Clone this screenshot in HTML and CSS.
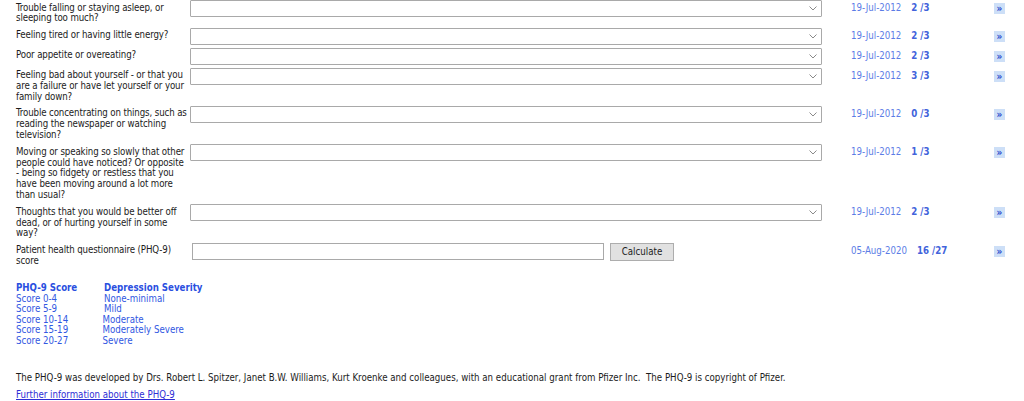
FILE: index.html
```html
<!DOCTYPE html>
<html lang="en">
<head>
<meta charset="utf-8">
<title>PHQ-9</title>
<link rel="stylesheet" href="styles.css">
</head>
<body>
<div class="page">
  <div class="questions">
    <div class="row">
      <div class="label">Trouble falling or staying asleep, or sleeping too much?</div>
      <div class="control"><div class="select"><svg class="chev" width="8" height="5" viewBox="0 0 8 5"><path d="M0.5 0.5 L4 4 L7.5 0.5" fill="none" stroke="#8a8a8a" stroke-width="1"/></svg></div></div>
      <div class="result"><span class="date">19-Jul-2012</span><span class="score">2 /3</span></div>
      <div class="more"><span class="go">»</span></div>
    </div>
    <div class="row">
      <div class="label">Feeling tired or having little energy?</div>
      <div class="control"><div class="select"><svg class="chev" width="8" height="5" viewBox="0 0 8 5"><path d="M0.5 0.5 L4 4 L7.5 0.5" fill="none" stroke="#8a8a8a" stroke-width="1"/></svg></div></div>
      <div class="result"><span class="date">19-Jul-2012</span><span class="score">2 /3</span></div>
      <div class="more"><span class="go">»</span></div>
    </div>
    <div class="row">
      <div class="label">Poor appetite or overeating?</div>
      <div class="control"><div class="select"><svg class="chev" width="8" height="5" viewBox="0 0 8 5"><path d="M0.5 0.5 L4 4 L7.5 0.5" fill="none" stroke="#8a8a8a" stroke-width="1"/></svg></div></div>
      <div class="result"><span class="date">19-Jul-2012</span><span class="score">2 /3</span></div>
      <div class="more"><span class="go">»</span></div>
    </div>
    <div class="row">
      <div class="label">Feeling bad about yourself - or that you are a failure or have let yourself or your family down?</div>
      <div class="control"><div class="select"><svg class="chev" width="8" height="5" viewBox="0 0 8 5"><path d="M0.5 0.5 L4 4 L7.5 0.5" fill="none" stroke="#8a8a8a" stroke-width="1"/></svg></div></div>
      <div class="result"><span class="date">19-Jul-2012</span><span class="score">3 /3</span></div>
      <div class="more"><span class="go">»</span></div>
    </div>
    <div class="row">
      <div class="label">Trouble concentrating on things, such as reading the newspaper or watching television?</div>
      <div class="control"><div class="select"><svg class="chev" width="8" height="5" viewBox="0 0 8 5"><path d="M0.5 0.5 L4 4 L7.5 0.5" fill="none" stroke="#8a8a8a" stroke-width="1"/></svg></div></div>
      <div class="result"><span class="date">19-Jul-2012</span><span class="score">0 /3</span></div>
      <div class="more"><span class="go">»</span></div>
    </div>
    <div class="row">
      <div class="label">Moving or speaking so slowly that other people could have noticed? Or opposite - being so fidgety or restless that you have been moving around a lot more than usual?</div>
      <div class="control"><div class="select"><svg class="chev" width="8" height="5" viewBox="0 0 8 5"><path d="M0.5 0.5 L4 4 L7.5 0.5" fill="none" stroke="#8a8a8a" stroke-width="1"/></svg></div></div>
      <div class="result"><span class="date">19-Jul-2012</span><span class="score">1 /3</span></div>
      <div class="more"><span class="go">»</span></div>
    </div>
    <div class="row">
      <div class="label">Thoughts that you would be better off dead, or of hurting yourself in some way?</div>
      <div class="control"><div class="select"><svg class="chev" width="8" height="5" viewBox="0 0 8 5"><path d="M0.5 0.5 L4 4 L7.5 0.5" fill="none" stroke="#8a8a8a" stroke-width="1"/></svg></div></div>
      <div class="result"><span class="date">19-Jul-2012</span><span class="score">2 /3</span></div>
      <div class="more"><span class="go">»</span></div>
    </div>
    <div class="row">
      <div class="label">Patient health questionnaire (PHQ-9) score</div>
      <div class="control total"><div class="textbox"></div><button class="calc" type="button">Calculate</button></div>
      <div class="result"><span class="date">05-Aug-2020</span><span class="score">16 /27</span></div>
      <div class="more"><span class="go">»</span></div>
    </div>
  </div>

  <div class="legend">
    <div class="lrow head"><span class="c1">PHQ-9 Score</span><span class="c2">Depression Severity</span></div>
    <div class="lrow"><span class="c1">Score 0-4</span><span class="c2">None-minimal</span></div>
    <div class="lrow"><span class="c1">Score 5-9</span><span class="c2">Mild</span></div>
    <div class="lrow"><span class="c1">Score 10-14</span><span class="c2 shift">Moderate</span></div>
    <div class="lrow"><span class="c1">Score 15-19</span><span class="c2 shift">Moderately Severe</span></div>
    <div class="lrow"><span class="c1">Score 20-27</span><span class="c2 shift">Severe</span></div>
  </div>

  <p class="credit">The PHQ-9 was developed by Drs. Robert L. Spitzer, Janet B.W. Williams, Kurt Kroenke and colleagues, with an educational grant from Pfizer Inc.&nbsp; The PHQ-9 is copyright of Pfizer.</p>
  <a class="info" href="#">Further information about the PHQ-9</a>
</div>
</body>
</html>
```

FILE: styles.css
```css
html, body {
  margin: 0;
  padding: 0;
  background: #ffffff;
}

body {
  font-family: "DejaVu Sans Condensed", "DejaVu Sans", sans-serif;
  font-size: 9.65px;
  line-height: 10.8px;
  color: #1c1c1c;
}

.page {
  padding: 0 0 0 16px;
}

.questions {
  display: flex;
  flex-direction: column;
}

.row {
  display: grid;
  grid-template-columns: 174px 632px 1fr 11px;
  margin-right: 19px;
}

.label {
  padding: 2.5px 2px 3.5px 0;
  letter-spacing: -0.12px;
}

.control {
  padding-bottom: 3px;
}

.select {
  box-sizing: border-box;
  height: 17px;
  border: 1px solid #a9a9a9;
  border-radius: 1px;
  background: #fff;
  display: flex;
  align-items: center;
  justify-content: flex-end;
  padding-right: 4px;
}

.chev {
  display: block;
}

.total {
  display: flex;
  align-items: flex-start;
  gap: 6px;
  padding-left: 2px;
}

.textbox {
  box-sizing: border-box;
  width: 412px;
  height: 17px;
  border: 1px solid #a9a9a9;
  background: #fff;
}

.calc {
  box-sizing: border-box;
  width: 64px;
  height: 18px;
  margin: 0;
  padding: 0;
  border: 1px solid #adadad;
  background: #e1e1e1;
  font-family: inherit;
  font-size: 9.65px;
  color: #1c1c1c;
}

.result {
  padding: 3px 0 0 29px;
  white-space: nowrap;
}

.date {
  color: #5b7ce6;
}

.score {
  margin-left: 10px;
  font-weight: bold;
  color: #4263db;
}

.more {
  padding-top: 3px;
}

.go {
  display: flex;
  align-items: center;
  justify-content: center;
  width: 11px;
  height: 11px;
  background: #cddff7;
  color: #2a4ccd;
  font-size: 10px;
  line-height: 11px;
  font-weight: bold;
}

.legend {
  margin-top: 13px;
  color: #3157e2;
  line-height: 10.5px;
}

.lrow {
  display: flex;
}

.lrow.head {
  font-weight: bold;
  color: #2a4fdf;
}

.c1 {
  width: 88px;
}

.c2.shift {
  margin-left: -1.5px;
}

.credit {
  margin: 27px 0 0 0;
  color: #1c1c1c;
}

.info {
  display: inline-block;
  margin-top: 6px;
  color: #2e2ed6;
  text-decoration: underline;
}
```
